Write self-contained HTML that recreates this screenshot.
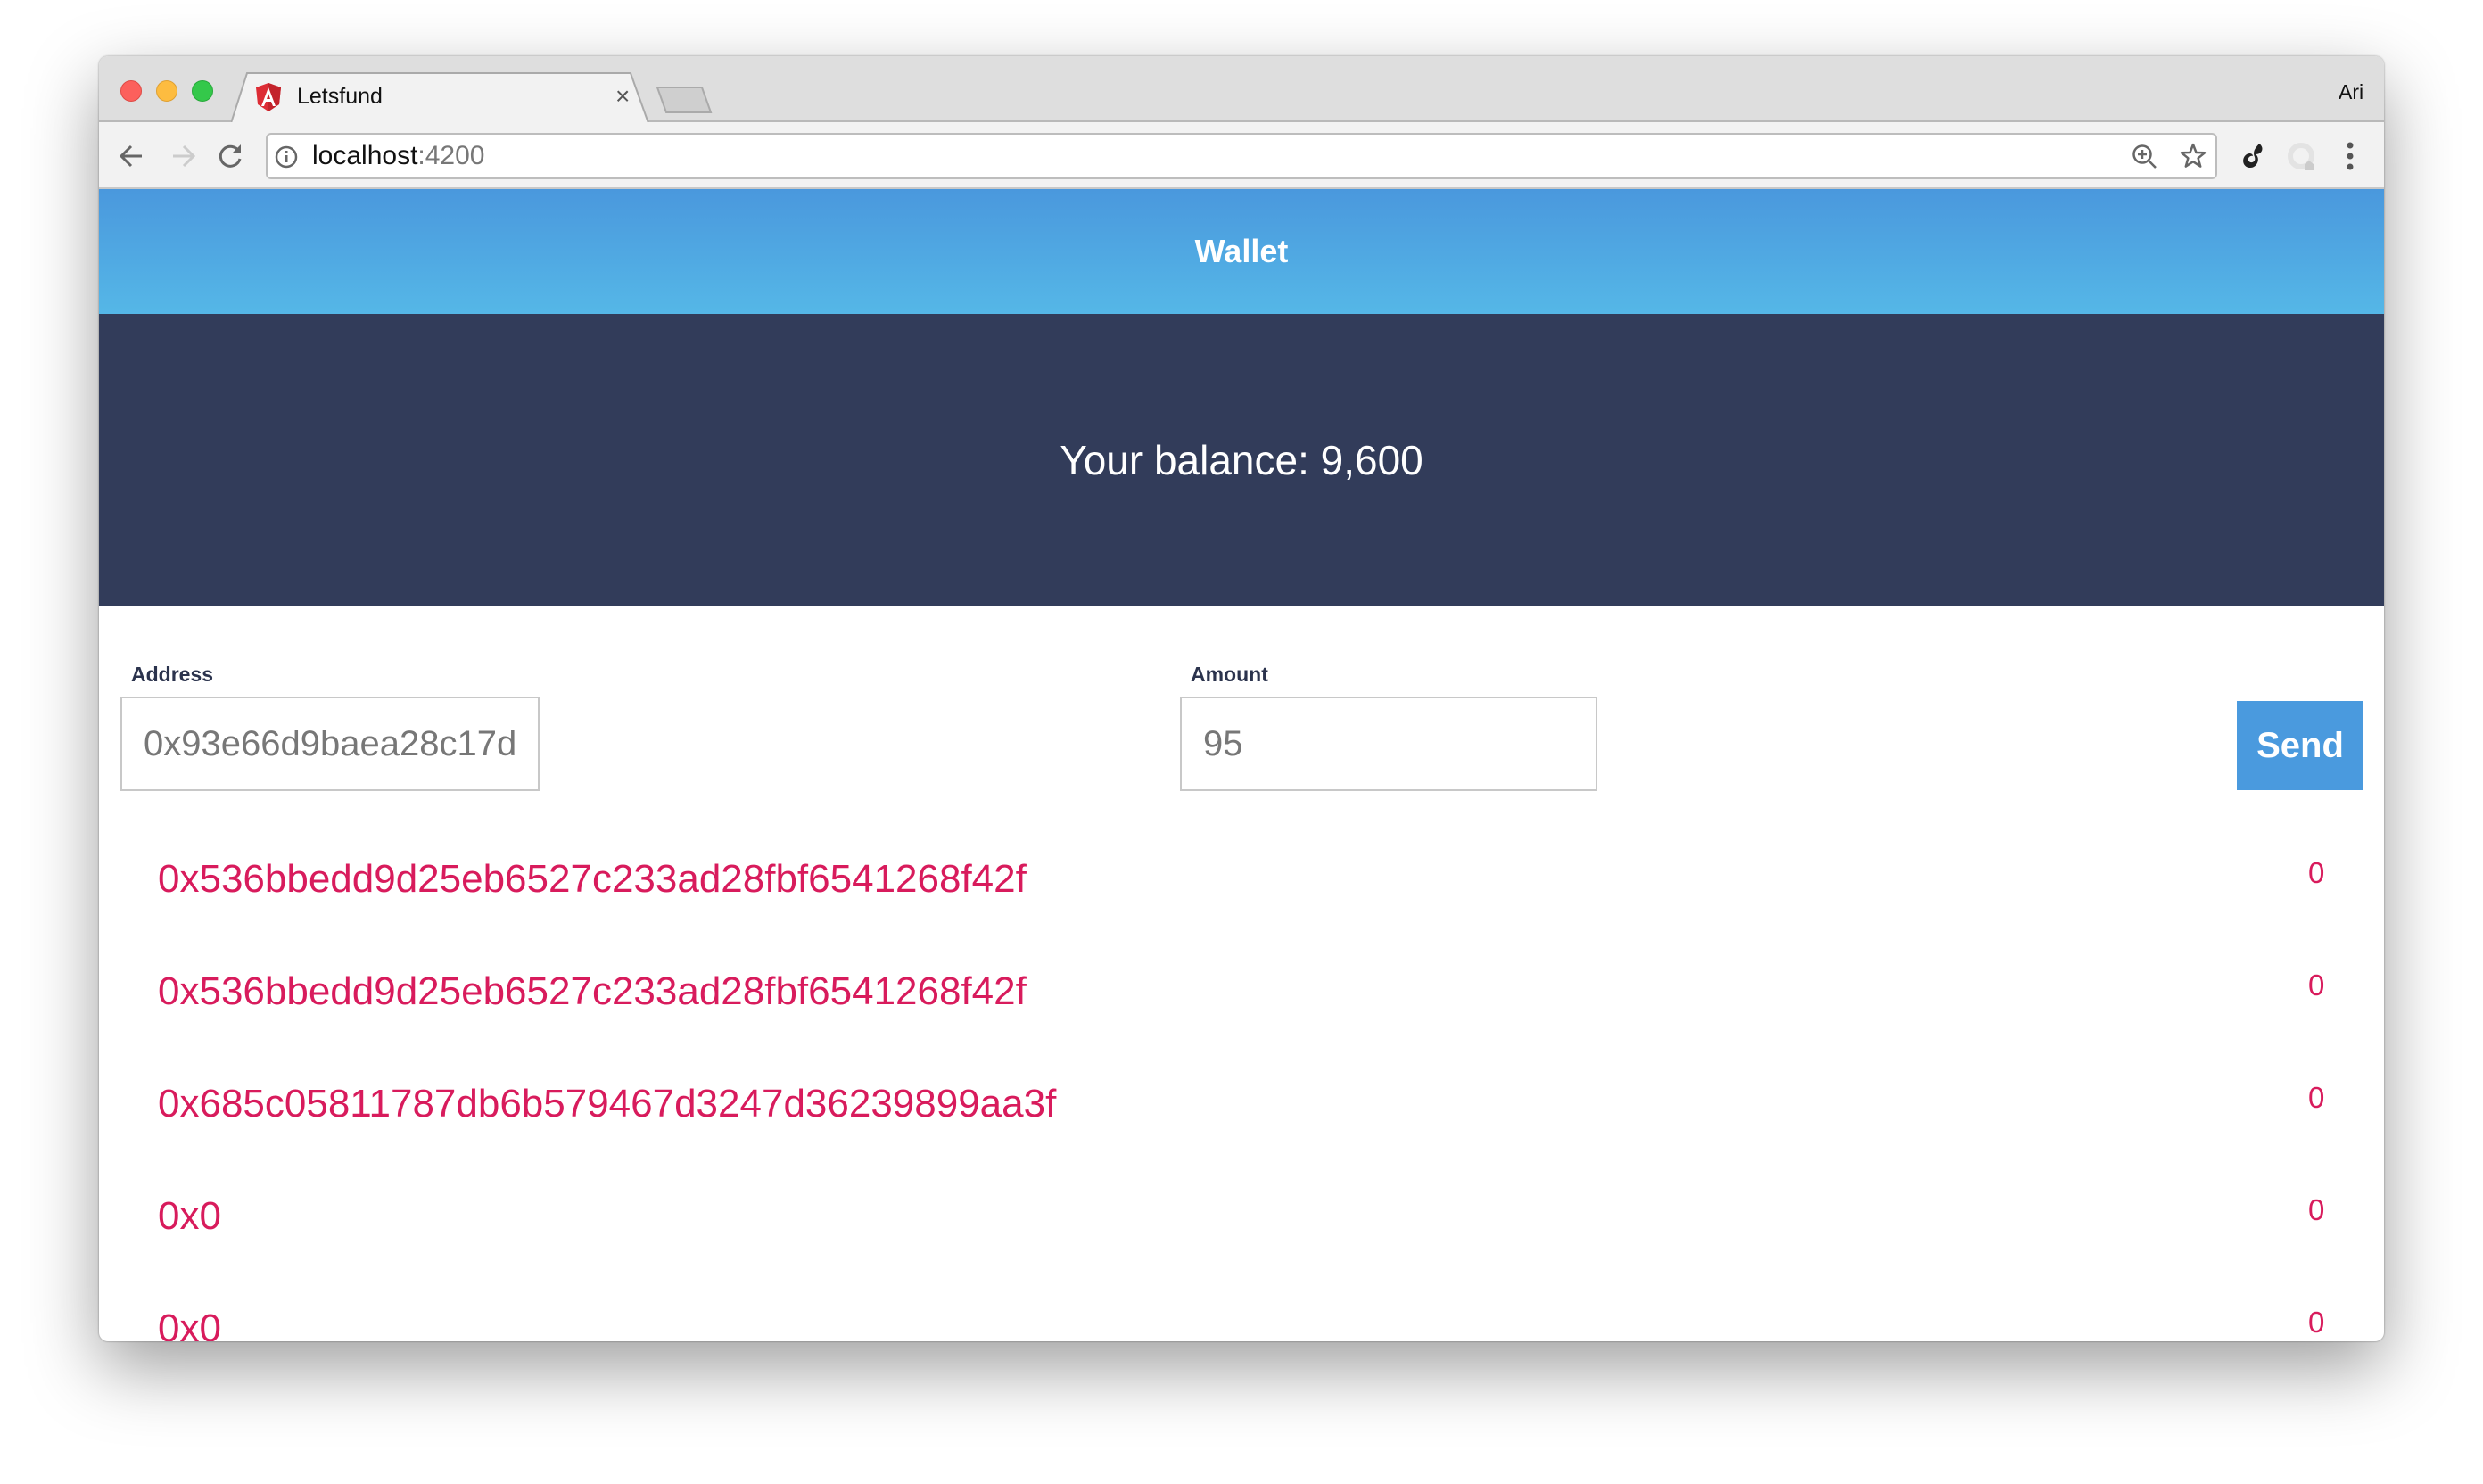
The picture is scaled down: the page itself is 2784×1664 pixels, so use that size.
<!DOCTYPE html>
<html><head><meta charset="utf-8"><style>
*{margin:0;padding:0;box-sizing:border-box}
html,body{width:2784px;height:1664px;background:#fff;overflow:hidden;font-family:"Liberation Sans",Arial,sans-serif}
.win{position:absolute;left:111px;top:63px;width:2562px;height:1441px;border-radius:10px;overflow:hidden;box-shadow:0 30px 80px rgba(0,0,0,0.38),0 0 2px rgba(0,0,0,0.4);background:#fff}
.tabbar{position:absolute;left:0;top:0;width:100%;height:74px;background:#dedede;border-bottom:2px solid #b9b9b9}
.dot{position:absolute;top:27px;width:24px;height:24px;border-radius:50%}
.tabshape{position:absolute;left:148px;top:18px}
.toolbar{position:absolute;left:0;top:74px;width:100%;height:75px;background:#f2f2f2;border-bottom:2px solid #c8c8c8}
.omni{position:absolute;left:187px;top:12px;width:2188px;height:52px;background:#fff;border:2px solid #bdbdbd;border-radius:6px}
.content{position:absolute;left:0;top:149px;width:100%}
.hdr{height:140px;background:linear-gradient(#4a98dd,#55b7e7);color:#fff;font-weight:bold;font-size:36px;text-align:center;line-height:140px}
.bal{height:328px;background:#323c5a;color:#fff;font-size:46px;text-align:center;line-height:328px}
.lbl{position:absolute;font-weight:bold;font-size:23px;color:#2b334d}
.inp{position:absolute;height:106px;border:2px solid #c8c8c8;color:#777;font-size:40px;line-height:102px;padding-left:24px;overflow:hidden;white-space:nowrap}
.send{position:absolute;left:2397px;top:574px;width:142px;height:100px;background:#4a9ade;color:#fff;font-weight:bold;font-size:40px;text-align:center;line-height:100px}
.addr{position:absolute;left:66px;color:#d81b5c;font-size:44px;white-space:nowrap}
.val{position:absolute;left:2477px;color:#d81b5c;font-size:33px}
</style></head><body>
<div class="win">
 <div class="tabbar">
  <div class="dot" style="left:24px;background:#fc605c;border:1px solid #de4a45"></div>
  <div class="dot" style="left:64px;background:#fdbc40;border:1px solid #dea033"></div>
  <div class="dot" style="left:104px;background:#34c84a;border:1px solid #27a93a"></div>
  <svg class="tabshape" width="470" height="58" viewBox="0 0 470 58"><path d="M0 57 L18 1 H448 L468 57" fill="#f2f2f2" stroke="#aaa" stroke-width="2"/></svg>
  <svg style="position:absolute;left:624px;top:33px" width="66" height="32" viewBox="0 0 66 32"><path d="M2 2 H52 L62 30 H12 Z" fill="#cfcfcf" stroke="#aaa" stroke-width="2"/></svg>
  <svg style="position:absolute;left:176px;top:30px" width="28" height="32" viewBox="0 0 28 32"><path d="M14 0 L28 5 L26 24 L14 32 L2 24 L0 5Z" fill="#dd2c35"/><path d="M14 0 L28 5 L26 24 L14 32Z" fill="#c3232b"/><path d="M14 5 L6 26 H9 L11 21 H17 L19 26 H22 Z M12 18 L14 12 L16 18Z" fill="#fff"/></svg>
  <div style="position:absolute;left:222px;top:31px;font-size:25px;color:#111">Letsfund</div>
  <div style="position:absolute;left:579px;top:29px;font-size:28px;color:#555">×</div>
  <div style="position:absolute;left:2511px;top:27px;font-size:23px;color:#111">Ari</div>
 </div>
 <div class="toolbar">
  <svg style="position:absolute;left:22px;top:24px" width="30" height="28" viewBox="0 0 30 28"><path d="M26 14 H4 M14 3 L3 14 L14 25" fill="none" stroke="#666" stroke-width="3"/></svg>
  <svg style="position:absolute;left:79px;top:24px" width="30" height="28" viewBox="0 0 30 28"><path d="M4 14 H26 M16 3 L27 14 L16 25" fill="none" stroke="#ccc" stroke-width="3"/></svg>
  <svg style="position:absolute;left:133px;top:23px" width="30" height="30" viewBox="0 0 30 30"><path d="M24 10 A11 11 0 1 0 25 18" fill="none" stroke="#666" stroke-width="3"/><path d="M26 2 V12 H16Z" fill="#666"/></svg>
  <div class="omni">
   <svg style="position:absolute;left:8px;top:12px" width="26" height="26" viewBox="0 0 26 26"><circle cx="13" cy="13" r="11" fill="none" stroke="#666" stroke-width="2.5"/><rect x="11.5" y="11" width="3" height="8" fill="#666"/><rect x="11.5" y="6" width="3" height="3" fill="#666"/></svg>
   <div style="position:absolute;left:50px;top:7px;font-size:30px;color:#111">localhost<span style="color:#777">:4200</span></div>
   <svg style="position:absolute;left:2090px;top:10px" width="30" height="30" viewBox="0 0 30 30"><circle cx="12" cy="12" r="9.5" fill="none" stroke="#666" stroke-width="2.5"/><path d="M19 19 L27 27 M12 7 V17 M7 12 H17" stroke="#666" stroke-width="2.5"/></svg>
   <svg style="position:absolute;left:2143px;top:8px" width="32" height="32" viewBox="0 0 32 32"><path d="M16 3 L19.5 12 L29 12.3 L21.6 18.3 L24.2 27.6 L16 22.2 L7.8 27.6 L10.4 18.3 L3 12.3 L12.5 12Z" fill="none" stroke="#666" stroke-width="2.5" stroke-linejoin="round"/></svg>
  </div>
  <svg style="position:absolute;left:2400px;top:22px" width="30" height="32" viewBox="0 0 30 32"><path d="M22 2 C28 6 26 14 18 14 C24 18 20 30 11 29 C3 28 2 18 8 14 C11 12 15 13 15 16 C12 15 9 18 10 21 C12 25 19 23 17 17 C14 10 19 6 22 2Z" fill="#222"/></svg>
  <svg style="position:absolute;left:2453px;top:22px" width="34" height="34" viewBox="0 0 34 34"><circle cx="16" cy="16" r="12" fill="none" stroke="#e3e3e3" stroke-width="6"/><path d="M20 32 V25 L25 21 L30 25 V32Z" fill="#ccc"/></svg>
  <svg style="position:absolute;left:2519px;top:22px" width="10" height="32" viewBox="0 0 10 32"><circle cx="5" cy="4" r="3.5" fill="#555"/><circle cx="5" cy="16" r="3.5" fill="#555"/><circle cx="5" cy="28" r="3.5" fill="#555"/></svg>
 </div>
 <div class="content">
  <div class="hdr">Wallet</div>
  <div class="bal">Your balance: 9,600</div>
  <div class="lbl" style="left:36px;top:531px">Address</div>
  <div class="inp" style="left:24px;top:569px;width:470px">0x93e66d9baea28c17d</div>
  <div class="lbl" style="left:1224px;top:531px">Amount</div>
  <div class="inp" style="left:1212px;top:569px;width:468px">95</div>
  <div class="send">Send</div>
  <div class="addr" style="top:749px">0x536bbedd9d25eb6527c233ad28fbf6541268f42f</div>
  <div class="val" style="top:748px">0</div>
  <div class="addr" style="top:875px">0x536bbedd9d25eb6527c233ad28fbf6541268f42f</div>
  <div class="val" style="top:874px">0</div>
  <div class="addr" style="top:1001px">0x685c05811787db6b579467d3247d36239899aa3f</div>
  <div class="val" style="top:1000px">0</div>
  <div class="addr" style="top:1127px">0x0</div>
  <div class="val" style="top:1126px">0</div>
  <div class="addr" style="top:1253px">0x0</div>
  <div class="val" style="top:1252px">0</div>
 </div>
</div>
</body></html>
